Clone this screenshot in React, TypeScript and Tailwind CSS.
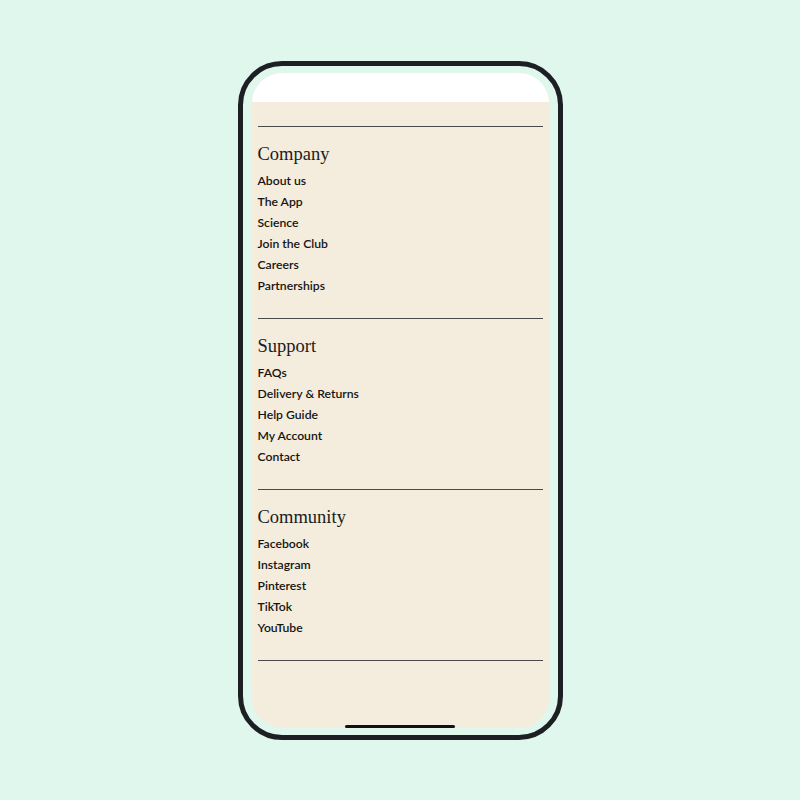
const sections = [
  {
    title: "Company",
    links: ["About us", "The App", "Science", "Join the Club", "Careers", "Partnerships"],
  },
  {
    title: "Support",
    links: ["FAQs", "Delivery & Returns", "Help Guide", "My Account", "Contact"],
  },
  {
    title: "Community",
    links: ["Facebook", "Instagram", "Pinterest", "TikTok", "YouTube"],
  },
]

function FooterSection({ title, links }: { title: string; links: string[] }) {
  return (
    <div>
      <div className="h-px bg-[#4a4a4a]" />
      <div className="pt-[15px] pb-[22px]">
        <h3 className="text-[18.5px] leading-[24px] text-[#1b1b1b] font-['Liberation_Serif',serif]">{title}</h3>
        <ul className="mt-[4px]">
          {links.map((link) => (
            <li
              key={link}
              className="text-[12.2px] leading-[21px] font-semibold text-[#141414] font-['Lato',sans-serif]"
            >
              {link}
            </li>
          ))}
        </ul>
      </div>
    </div>
  )
}

export default function App() {
  return (
    <div className="w-[800px] h-[800px] bg-[#e0f7ee] flex items-center justify-center">
      <div className="relative w-[325px] h-[679px] border-[5px] border-[#1c2022] rounded-[44px] px-[9px] py-[7px]">
        <div className="h-full rounded-[30px] overflow-hidden bg-[#f4ecdc] flex flex-col">
          <div className="h-[29px] bg-white shrink-0" />
          <div className="px-[6px] pt-[24px]">
            {sections.map((s) => (
              <FooterSection key={s.title} title={s.title} links={s.links} />
            ))}
            <div className="h-px bg-[#4a4a4a]" />
          </div>
        </div>
        <div className="absolute left-1/2 -translate-x-1/2 bottom-[7px] w-[110px] h-[3px] rounded-full bg-[#111]" />
      </div>
    </div>
  )
}
